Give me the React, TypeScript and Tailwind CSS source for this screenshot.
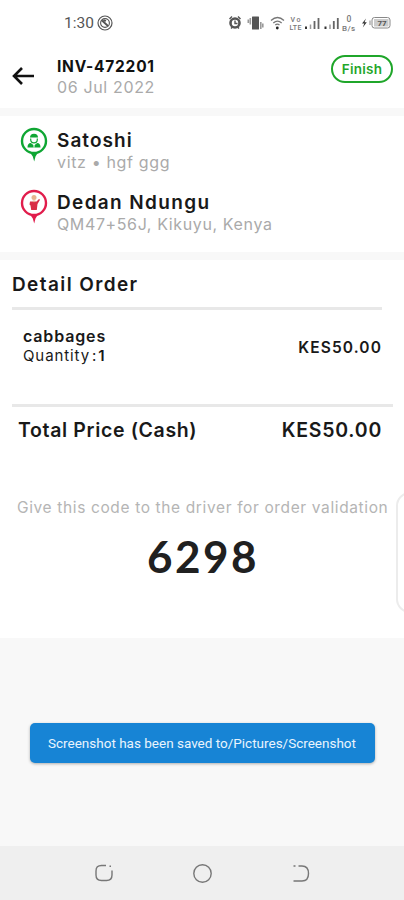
import React from "react";

const StatusBar = () => (
  <div className="flex h-[46px] shrink-0 items-center pl-[64px] text-[#555555]">
    <span className="w-[33px] whitespace-nowrap pt-[2px] font-['Roboto',sans-serif] text-[15.5px] leading-none">
      1:30
    </span>
    <svg width="16" height="16" viewBox="0 0 16 16" fill="none" stroke="currentColor">
      <circle cx="8" cy="8" r="7" strokeWidth="1.2" />
      <circle cx="8" cy="8" r="4.4" strokeWidth="1.1" />
      <path d="M5 5.500l6 5.500M6.500 5l2.500 1" strokeWidth="1.800" />
    </svg>

    {/* alarm, vibrate, wifi, signal, speed, battery */}
    <svg
      className="ml-[115px]"
      width="164"
      height="22"
      viewBox="228 12 164 22"
      fill="none"
      stroke="currentColor"
    >
      <circle cx="235" cy="23" r="4.5" strokeWidth="2.6" />
      <path d="m229.5 19 2.5-2.5m6 0 2.5 2.5M231 28.5l1.4-1.5m6.6 1.5-1.4-1.5M235 20.5V23.5h2.5" strokeWidth="1.4" />
      <rect x="252" y="16.5" width="7" height="13" rx="0.5" fill="currentColor" stroke="none" />
      <path d="M250.300 18v6.500m-2-5v3.500m12.500-1v7m2-5.500v4" stroke="#999999" strokeWidth="1.6" />
      <path d="M271 20.5q6.500-6 13 0M273.300 23q4.200-3.800 8.400 0" strokeWidth="1.3" stroke="#777777" />
      <path d="M275.300 25q2-1.800 4.200 0" strokeWidth="1.2" stroke="#777777" />
      <circle cx="277.300" cy="28" r="1.400" fill="#222222" stroke="none" />
      <g fill="#777777" stroke="none" fontFamily="Roboto, sans-serif" fontSize="7" fontWeight="500">
        <text x="290.500" y="22" textLength="10">Vo</text>
        <text x="289.500" y="29.500" textLength="12">LTE</text>
        <text x="346.500" y="22" fontSize="8.500">0</text>
        <text x="342" y="31" fontSize="8" textLength="13">B/s</text>
      </g>
      <path d="M306 26.500v2.500M325.500 26.500v2.500" stroke="#333333" strokeWidth="2" />
      <path d="M310.500 24.500v4.500M330 24.500v4.500" stroke="#999999" strokeWidth="1.500" />
      <path d="M314.500 21v8m4-11v11M333.800 21v8m4-11v11" stroke="#666666" strokeWidth="1.800" />
      <path d="m366 18.500-4 5h2.300l-1.500 4 4-5.200h-2.300z" fill="#333333" stroke="none" />
      <rect x="372" y="17.500" width="18" height="10.500" rx="2.500" stroke="#888888" />
      <path d="M370 20.500v4.500" stroke="#888888" />
      <rect x="374" y="19" width="14.500" height="7.500" fill="#cccccc" stroke="none" />
      <text x="377.500" y="26" fontSize="8" fontWeight="700" fill="#555555" stroke="none" fontFamily="Roboto, sans-serif">
        77
      </text>
    </svg>
  </div>
);

const Header = () => (
  <header className="flex h-[62px] shrink-0 items-start pl-3">
    <svg className="mt-5" width="23" height="20" viewBox="0 0 23 20" fill="none" stroke="#111111" strokeWidth="2.6">
      <path d="M10 2 2 10l8 8M2 10h20" />
    </svg>
    <div className="ml-[22px] mt-[10px] flex flex-col whitespace-nowrap">
      <h1 className="text-[15.5px] font-bold leading-[21px] tracking-[0.75px] text-[#111111]">INV-472201</h1>
      <p className="text-[16px] leading-[20px] tracking-[0.65px] text-[#aaaaaa]">06 Jul 2022</p>
    </div>
    <button className="ml-auto mr-[11px] mt-[9px] h-[28px] w-[62px] rounded-full border-2 border-[#1fa62a] pt-[2px] text-[13.5px] font-semibold leading-none tracking-[0.25px] text-[#1fa62a]">
      Finish
    </button>
  </header>
);

const SenderPin = () => (
  <svg width="28" height="36" viewBox="0 0 28 36">
    <path d="M10 25.500h8l-2.500 4-1.300 5-1.400-5z" fill="#0fa633" />
    <circle cx="14" cy="14" r="12" fill="#fff" stroke="#0fa633" strokeWidth="2.400" />
    <path d="M10 10.500a4 3.800 0 0 1 8 0z" fill="#0fa633" />
    <path d="M10.700 11.500v1a3.300 3.300 0 0 0 6.600 0v-1" fill="none" stroke="#0fa633" strokeWidth="1.200" />
    <path d="M7.500 20.500q0-4.500 3.300-4.500l3.200 2.500 3.200-2.500q3.300 0 3.300 4.500z" fill="#0fa633" />
    <path d="M14 17.500v3" stroke="#fff" strokeWidth="1" />
  </svg>
);

const ReceiverPin = () => (
  <svg width="28" height="36" viewBox="0 0 28 36">
    <path d="M10 25.500h8l-2.500 4-1.300 5-1.400-5z" fill="#e11d4c" />
    <circle cx="14" cy="14" r="12" fill="#fff" stroke="#e11d4c" strokeWidth="2.400" />
    <circle cx="14" cy="8.500" r="2.500" fill="#e6b590" />
    <path d="M10 12.500h6.500l2.500-2.500 1 .8-2.500 4.200-.7 6h-5.600l-.7-4.500-1-1z" fill="#d92e45" />
    <path d="M12.500 11.500h3l-1.500 2z" fill="#e6b590" />
  </svg>
);

const App = () => {
  return (
    <div className="relative flex h-[900px] w-[404px] flex-col overflow-hidden bg-white font-['Inter',sans-serif] text-[#191919]">
      <StatusBar />
      <Header />

      {/* addresses */}
      <section className="h-[152px] shrink-0 whitespace-nowrap border-y-8 border-[#f8f8f8] pl-5">
        <div className="flex pt-[11px]">
          <SenderPin />
          <div className="ml-[9px] mt-[3px]">
            <h2 className="text-[19px] font-semibold leading-[22px] tracking-[1.05px]">Satoshi</h2>
            <p className="text-[16px] leading-[21px] tracking-[0.65px] text-[#aaaaaa]">vitz • hgf ggg</p>
          </div>
        </div>
        <div className="flex pt-[16px]">
          <ReceiverPin />
          <div className="ml-[9px] mt-[3px]">
            <h2 className="text-[19px] font-semibold leading-[22px] tracking-[1.35px]">Dedan Ndungu</h2>
            <p className="text-[16px] leading-[21px] tracking-[0.62px] text-[#aaaaaa]">QM47+56J, Kikuyu, Kenya</p>
          </div>
        </div>
      </section>

      {/* order detail */}
      <main className="h-[378px] shrink-0 whitespace-nowrap pl-3">
        <h2 className="pt-[13px] text-[19px] font-semibold leading-[23px] tracking-[1.4px]">Detail Order</h2>
        <div className="mt-[11px] h-[3px] w-[370px] bg-[#e8e8e8]" />
        <div className="flex h-[94px] justify-between pl-[11px] pr-[22px] pt-[16px]">
          <div>
            <h3 className="text-[16px] font-semibold leading-[20px] tracking-[0.85px]">cabbages</h3>
            <p className="flex text-[15px] leading-[20px] tracking-[0.9px]">
              <span>Quantity</span>
              <span className="ml-[2px]">:</span>
              <span className="ml-px font-semibold">1</span>
            </p>
          </div>
          <span className="pt-[12px] text-[15.5px] font-semibold leading-[20px] tracking-[1.1px]">KES50.00</span>
        </div>
        <div className="h-[3px] w-[381px] bg-[#e8e8e8]" />
        <div className="flex justify-between pl-[6px] pr-[22px] pt-[11px] text-[19.5px] font-semibold leading-[24px]">
          <span className="tracking-[0.65px]">Total Price (Cash)</span>
          <span className="tracking-[0.75px]">KES50.00</span>
        </div>
        <p className="ml-[5px] mt-[55px] text-[15.5px] leading-[22px] tracking-[0.63px] text-[#b5b5b5]">
          Give this code to the driver for order validation
        </p>
        <p className="mt-[12px] pr-[10px] text-center font-['Lato',sans-serif] text-[44px] font-bold leading-[50px] tracking-[2.5px] text-[#202020]">
          6298
        </p>
      </main>

      <div className="flex h-[208px] shrink-0 justify-center bg-[#f8f8f8] pt-[85px]">
        <div className="flex h-[40px] w-[345px] items-center justify-center whitespace-nowrap rounded-[5px] bg-[#1784d5] pt-px font-['Roboto',sans-serif] text-[13.5px] text-[#e9f4fd] shadow-[0_1px_3px_rgba(0,0,0,0.3)]">
          Screenshot has been saved to/Pictures/Screenshot
        </div>
      </div>

      <nav className="flex grow items-center justify-between bg-[#efefef] pl-[94px] pr-[93px] text-[#777777]">
        <svg width="20" height="20" viewBox="0 0 20 20" fill="none" stroke="currentColor" strokeWidth="1.400">
          <path d="M12 2.500H7.500Q2 2.500 2 8v4q0 5.500 5.500 5.500h5q5.500 0 5.500-5.500V7.500M15.500 3.300H17" />
        </svg>
        <svg width="20" height="20" viewBox="0 0 20 20" fill="none" stroke="currentColor" strokeWidth="1.400">
          <circle cx="9.500" cy="10.500" r="8.700" />
        </svg>
        <svg width="20" height="20" viewBox="0 0 20 20" fill="none" stroke="currentColor" strokeWidth="1.400">
          <path d="M2.500 3h2M7.500 3H11q6.500 0 6.500 7.500T11 18H2.500" />
        </svg>
      </nav>

      {/* edge panel handle */}
      <div className="absolute right-[-20px] top-[492px] h-[121px] w-[28px] rounded-[14px] border-2 border-[#ececec] bg-white" />
    </div>
  );
};

export default App;
